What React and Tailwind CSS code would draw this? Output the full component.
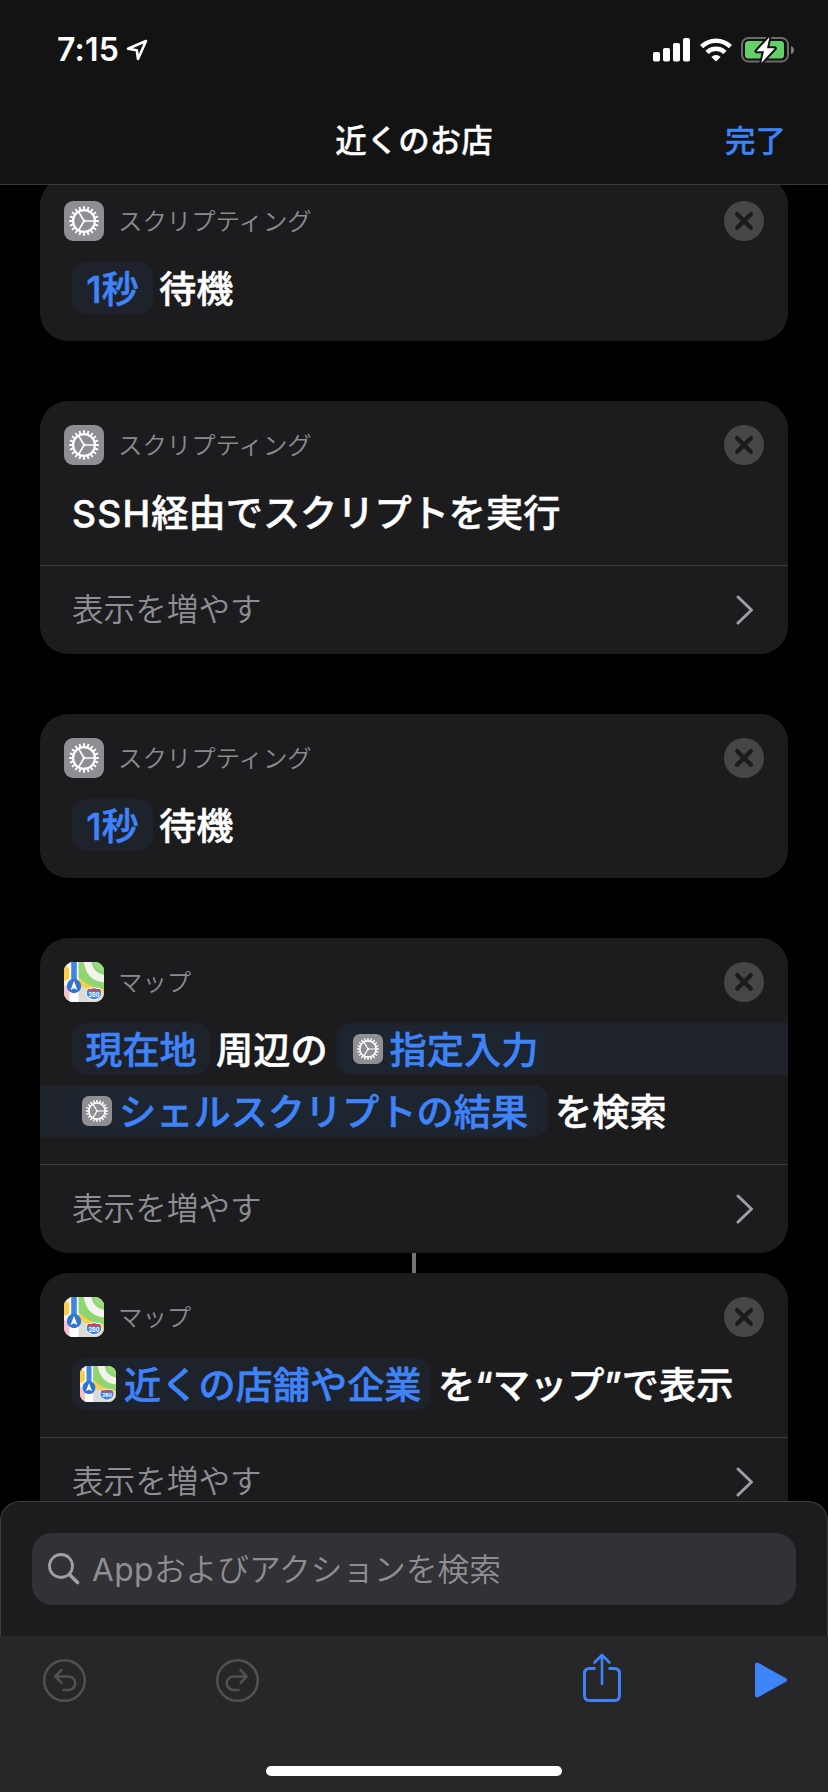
import React from "react";

const teeth = Array.from({ length: 20 }, (_, i) => i * 18);

function GearIcon({ className }) {
  return (
    <svg viewBox="0 0 40 40" className={className}>
      <rect width="40" height="40" rx="9" fill="#8e8e93" />
      <g stroke="#fff" fill="none">
        <circle cx="20" cy="20" r="10.9" strokeWidth="2.2" />
        {teeth.map((deg) => (
          <path
            key={deg}
            d="M20 8.6V5.2"
            strokeWidth="1.9"
            transform={`rotate(${deg} 20 20)`}
          />
        ))}
        <path d="M20 20H31M20 20L14.5 10.5M20 20L14.5 29.5" strokeWidth="1.6" />
      </g>
      <circle cx="20" cy="20" r="1.4" fill="#fff" />
    </svg>
  );
}

function MapIcon({ className, id }) {
  return (
    <svg viewBox="0 0 40 40" className={className}>
      <clipPath id={id}>
        <rect width="40" height="40" rx="9" />
      </clipPath>
      <g clipPath={`url(#${id})`}>
        <rect width="40" height="40" fill="#f3f2ee" />
        <path d="M0 23L12 29V40H0Z" fill="#f5bfcb" />
        <path d="M14 20L40 34V40H14Z" fill="#dcdbd8" />
        <path d="M14 0H40V31C30 28 20 22 14 15Z" fill="#8fd673" />
        <path d="M23 -4C24 10 31 17 44 17" fill="none" stroke="#f3f2ee" strokeWidth="7.5" />
        <path d="M30 0C31 6 35 9 40 9V0Z" fill="#9bdc80" />
        <path d="M0 8C8 14 14 19 22 24C28 28 34 29 40 30" fill="none" stroke="#fbce4a" strokeWidth="5" />
        <path d="M0 3V19L5 17V6Z" fill="#fbce4a" />
        <path d="M34 40L40 33V40Z" fill="#fbce4a" />
        <path d="M5.5 0H14.5V40H5.5Z" fill="#fff" />
        <path d="M7.2 0H12.8V22H7.2Z" fill="#3f86dd" />
        <circle cx="10" cy="24" r="7.2" fill="#2e74d0" />
        <path d="M10 18.8L13.4 28L10 26.2L6.6 28Z" fill="#fff" />
        <path
          d="M24 26.2Q27 27 30 25.6Q33 27 36 26.2Q38.4 29 37.8 32.5Q36.5 36.5 30 38Q23.5 36.5 22.2 32.5Q21.6 29 24 26.2Z"
          fill="#3f86dd"
          stroke="#fff"
          strokeWidth="1"
        />
        <path d="M24.2 27.2Q27 27.6 30 26.6Q33 27.6 35.8 27.2L36.8 29.3H23.2Z" fill="#d4424a" />
        <text
          x="30"
          y="34.6"
          textAnchor="middle"
          fontSize="5.5"
          fontWeight="700"
          fill="#fff"
          fontFamily="Inter, sans-serif"
        >
          280
        </text>
      </g>
    </svg>
  );
}

function CloseIcon() {
  return (
    <svg viewBox="0 0 40 40" className="w-10 h-10 ml-auto">
      <circle cx="20" cy="20" r="20" fill="#464648" />
      <path
        d="M13.2 13.2L26.8 26.8M26.8 13.2L13.2 26.8"
        stroke="#1c1c1e"
        strokeWidth="4.4"
        strokeLinecap="round"
      />
    </svg>
  );
}

function Card({ type, id, more, children }) {
  return (
    <div className="shrink-0 w-[748px] rounded-[28px] bg-[#1c1c1e] overflow-hidden">
      <div className="pt-6 pb-[27px]">
        <div className="flex items-center px-6 h-10 mb-[21px]">
          {type === "map" ? (
            <MapIcon id={id} className="w-10 h-10" />
          ) : (
            <GearIcon className="w-10 h-10" />
          )}
          <span className="ml-[14px] text-[24.4px] leading-10 font-[350] text-[#8a8a8f]">
            {type === "map" ? "マップ" : "スクリプティング"}
          </span>
          <CloseIcon />
        </div>
        <div className="flex flex-col gap-[10px] text-[37.2px] leading-[56px] font-medium text-white whitespace-nowrap [-webkit-text-stroke:0.5px]">
          {children}
        </div>
      </div>
      {more && (
        <div className="flex items-center justify-between h-[89px] border-t border-[#3a3a3c] pl-8 pr-[34px]">
          <span className="text-[31.6px] leading-[44px] font-[350] text-[#8e8e93]">
            表示を増やす
          </span>
          <svg viewBox="0 0 18 30" className="w-[18px] h-[30px]">
            <path
              d="M2 2L15.5 15L2 28"
              fill="none"
              stroke="#9d9da2"
              strokeWidth="3"
              strokeLinecap="round"
              strokeLinejoin="round"
            />
          </svg>
        </div>
      )}
    </div>
  );
}

function Wait() {
  return (
    <Card type="script">
      <div className="flex h-[52px] pl-8">
        <span className="w-[81px] h-[52px] rounded-[14px] bg-[#1e222b] text-[#3f83f8] text-center">
          1秒
        </span>
        <span className="ml-[6px]">待機</span>
      </div>
    </Card>
  );
}

function StatusBar() {
  return (
    <div className="flex items-center h-[100px] pl-[57px] pr-[34px]">
      <span className="text-[32px] font-semibold text-white tracking-[0.2px]">7:15</span>
      <svg viewBox="0 0 22 22" className="w-[22px] h-[22px] ml-[7px]">
        <path
          d="M20 2L2 9.8L10.8 11.2L12 20Z"
          fill="none"
          stroke="#fff"
          strokeWidth="2.6"
          strokeLinejoin="round"
        />
      </svg>
      <svg viewBox="0 0 38 24" className="w-[38px] h-6 ml-auto" fill="#fff">
        <rect x="0" y="14" width="7" height="9.5" rx="1.8" />
        <rect x="10" y="10" width="7" height="13.5" rx="1.8" />
        <rect x="20" y="5" width="7" height="18.5" rx="1.8" />
        <rect x="30" y="0" width="7" height="23.5" rx="1.8" />
      </svg>
      <svg viewBox="0 0 32 24" className="w-8 h-6 ml-[9px]">
        <g fill="none" stroke="#fff" strokeWidth="4.6">
          <path d="M1.6 8.6A20.5 20.5 0 0 1 30.4 8.6" />
          <path d="M7 14.4A12.8 12.8 0 0 1 25 14.4" />
        </g>
        <path d="M16 23.5L11.4 18.9A6.5 6.5 0 0 1 20.6 18.9Z" fill="#fff" />
      </svg>
      <svg viewBox="0 0 53 28" className="w-[53px] h-7 ml-[9px]">
        <rect x="1" y="2" width="46" height="23.5" rx="6.5" fill="none" stroke="#6b6b6b" strokeWidth="2" />
        <path d="M50 10Q53 11 53 14T50 18Z" fill="#7c7c7c" />
        <rect x="4" y="5" width="39" height="17.5" rx="3.5" fill="#65cf6a" />
        <path
          d="M28.5 1L15.5 15.2H23L20.3 27L33.8 12.3H26Z"
          fill="#fff"
          stroke="#131313"
          strokeWidth="4"
          strokeLinejoin="round"
        />
        <path d="M28.5 1L15.5 15.2H23L20.3 27L33.8 12.3H26Z" fill="#fff" />
      </svg>
    </div>
  );
}

export default function App() {
  return (
    <div className="flex flex-col w-[828px] h-[1792px] bg-black overflow-hidden font-['Inter','Noto_Sans_CJK_JP',sans-serif]">
      <header className="shrink-0 h-[185px] bg-[#131313] border-b border-[#3a3a3b]">
        <StatusBar />
        <div className="grid grid-cols-3 items-center h-[82px] px-[42px] text-[31.5px] leading-[44px] font-medium [-webkit-text-stroke:0.3px]">
          <span className="col-start-2 text-center text-white">近くのお店</span>
          <span className="text-right text-[30.5px] text-[#3f83f8]">完了</span>
        </div>
      </header>

      <main className="flex-1 min-h-0 overflow-hidden">
        <div className="flex flex-col items-center gap-[60px] -mt-2">
          <Wait />
          <Card type="script" more>
            <div className="h-[52px] pl-8">
              <span className="tracking-[1.2px]">SSH</span>経由でスクリプトを実行
            </div>
          </Card>
          <Wait />
          <div className="flex flex-col items-center">
            <Card type="map" id="map-search" more>
              <div className="flex h-[52px] pl-8">
                <span className="w-[138px] rounded-[14px] bg-[#1e222b] text-[#3f83f8] text-center">
                  現在地
                </span>
                <span className="ml-[6px]">周辺の</span>
                <span className="flex flex-1 items-center ml-[8px] pl-[5px] rounded-l-[14px] bg-[#1e222b] text-[#3f83f8]">
                  <span className="flex items-center h-[46px] pl-3 pr-2 rounded-[8px] bg-[#1c2530]">
                    <GearIcon className="w-[30px] h-[30px] mr-[7px]" />
                    <span className="pt-1">指定入力</span>
                  </span>
                </span>
              </div>
              <div className="flex h-[52px]">
                <span className="flex items-center w-[508px] h-[52px] pl-[34px] rounded-r-[14px] bg-[#1e222b] text-[#3f83f8]">
                  <span className="flex items-center h-[46px] pl-2 pr-2 rounded-[8px] bg-[#1c2530]">
                    <GearIcon className="w-[30px] h-[30px] mr-[7px]" />
                    <span className="pt-1">シェルスクリプトの結果</span>
                  </span>
                </span>
                <span className="ml-[7px]">を検索</span>
              </div>
            </Card>
            <div className="w-1 h-5 bg-[#74747b]" />
            <Card type="map" id="map-show" more>
              <div className="flex h-[52px] pl-8">
                <span className="flex items-center w-[358px] h-[52px] pl-2 rounded-[14px] bg-[#1e222b] text-[#3f83f8]">
                  <MapIcon id="map-token" className="w-9 h-9 mr-2" />
                  <span className="pt-1">近くの店舗や企業</span>
                </span>
                <span className="ml-2">を“マップ”で表示</span>
              </div>
            </Card>
          </div>
        </div>
      </main>

      <footer className="shrink-0 h-[291px]">
        <div className="h-[135px] pt-[31px] px-[31px] bg-[#1c1c1e] border border-b-0 border-[#3f3f41] rounded-t-[20px]">
          <div className="flex items-center h-[72px] pl-4 rounded-[20px] bg-[#323236]">
            <svg viewBox="0 0 32 32" className="w-8 h-8">
              <g fill="none" stroke="#a0a0a6" strokeLinecap="round">
                <circle cx="13" cy="13" r="11.5" strokeWidth="2.8" />
                <path d="M21.5 21.5L29.5 29.5" strokeWidth="3.6" />
              </g>
            </svg>
            <span className="ml-3 pt-[2px] text-[31.7px] leading-[44px] font-[350] text-[#8e8e93]">
              <span className="font-normal tracking-[0.4px]">App</span>およびアクションを検索
            </span>
          </div>
        </div>
        <div className="flex flex-col h-[156px] bg-[#272729]">
          <div className="flex items-center h-[88px] pl-[42px] pr-10">
            <svg viewBox="0 0 45 45" className="w-[45px] h-[45px]">
              <g fill="none" stroke="#515153" strokeWidth="2.5" strokeLinecap="round" strokeLinejoin="round">
                <circle cx="22.5" cy="22.5" r="20.3" />
                <path d="M19.5 12L13.2 18.4L19.5 24.8M13.5 18.4H26.5A6.8 6.8 0 0 1 26.5 32H21.5" />
              </g>
            </svg>
            <svg viewBox="0 0 45 45" className="w-[45px] h-[45px] ml-32">
              <g fill="none" stroke="#515153" strokeWidth="2.5" strokeLinecap="round" strokeLinejoin="round">
                <circle cx="22.5" cy="22.5" r="20.3" />
                <path d="M25.5 12L31.8 18.4L25.5 24.8M31.5 18.4H18.5A6.8 6.8 0 0 0 18.5 32H23.5" />
              </g>
            </svg>
            <svg viewBox="0 0 38 50" className="w-[38px] h-[50px] ml-auto mb-1">
              <g fill="none" stroke="#3f83f8" strokeLinejoin="round">
                <path
                  d="M12.5 15.5H6.5Q1.5 15.5 1.5 20.5V42.5Q1.5 47.5 6.5 47.5H31.5Q36.5 47.5 36.5 42.5V20.5Q36.5 15.5 31.5 15.5H25.5"
                  strokeWidth="3"
                />
                <path
                  d="M19 31V2.5M11.5 9.500L19 2L26.5 9.5"
                  strokeWidth="2.6"
                  strokeLinecap="round"
                />
              </g>
            </svg>
            <svg viewBox="0 0 34 38" className="w-[34px] h-[38px] ml-[133px]">
              <path
                d="M3 3.5L31 19L3 34.5Z"
                fill="#3f83f8"
                stroke="#3f83f8"
                strokeWidth="4"
                strokeLinejoin="round"
              />
            </svg>
          </div>
          <div className="w-[296px] h-[10px] mt-[42px] mx-auto rounded-full bg-white" />
        </div>
      </footer>
    </div>
  );
}
